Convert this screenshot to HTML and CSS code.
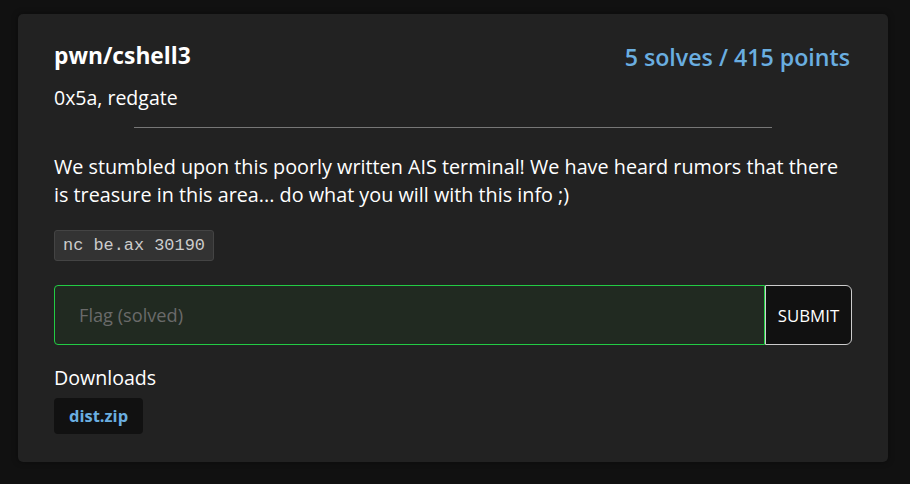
FILE: index.html
```html
<!DOCTYPE html>
<html>
<head>
<meta charset="utf-8">
<link rel="stylesheet" href="styles.css">
</head>
<body>
<div class="card">
  <div class="head">
    <div>
      <h1 class="title">pwn/cshell3</h1>
      <div class="author">0x5a, redgate</div>
    </div>
    <div class="score">5 solves / 415 points</div>
  </div>
  <hr class="rule">
  <p class="desc">We stumbled upon this poorly written AIS terminal! We have heard rumors that there is treasure in this area... do what you will with this info ;)</p>
  <div class="codewrap"><code class="code">nc be.ax 30190</code></div>
  <form class="flag">
    <input class="flag-input" type="text" placeholder="Flag (solved)">
    <button class="submit" type="button">SUBMIT</button>
  </form>
  <div class="dl-title">Downloads</div>
  <div class="dl-list"><a class="dl" href="#">dist.zip</a></div>
</div>
</body>
</html>
```
FILE: styles.css
```css
html, body { margin: 0; padding: 0; }
body {
  background: #111;
  font-family: "Open Sans", "Noto Sans", sans-serif;
  color: #fff;
  padding: 14px 22px 0 18px;
  height: 484px;
  box-sizing: border-box;
}
.card {
  background: #222;
  border-radius: 5px;
  padding: 27px 36px 28px 36px;
  height: 448px;
  box-sizing: border-box;
  box-shadow: 0 0 6px rgba(0,0,0,0.4);
}
.head {
  display: flex;
  justify-content: space-between;
  align-items: flex-start;
}
.title {
  margin: 0;
  font-size: 22.8px;
  font-weight: 700;
  line-height: 30px;
}
.author {
  margin-top: 14px;
  font-size: 19.5px;
  line-height: 26px;
}
.score {
  color: #6aaee0;
  font-size: 23.2px;
  font-weight: 600;
  line-height: 32px;
  margin-right: 2px;
}
.rule {
  width: 80%;
  margin: 16px auto 0;
  border: 0;
  border-top: 1px solid #777;
  height: 0;
}
.desc {
  margin: 25px 0 0;
  font-size: 19.8px;
  line-height: 28px;
}
.codewrap { margin-top: 21px; display: flex; }
.code {
  font-family: "Liberation Mono", monospace;
  font-size: 16.9px;
  color: #ccc;
  background: #333;
  border: 1px solid #444;
  border-radius: 3px;
  padding: 0 8px;
  height: 31px;
  line-height: 29px;
  box-sizing: border-box;
}
.flag {
  display: flex;
  margin: 24px 0 0;
  height: 60px;
}
.flag-input {
  flex: 1;
  background: #212a21;
  border: 1px solid #22cc44;
  border-radius: 4px 0 0 4px;
  padding: 0 24px;
  font-family: inherit;
  font-size: 18.2px;
  color: #ddd;
  outline: none;
}
.flag-input::placeholder { color: #6a6a6a; }
.submit {
  width: 87px;
  background: #111;
  color: #fff;
  border: 1px solid #ccc;
  border-radius: 0 6px 6px 0;
  font-family: inherit;
  font-size: 16.8px;
  padding: 0;
}
.dl-title {
  margin-top: 20px;
  font-size: 19.6px;
  line-height: 26px;
}
.dl-list { margin-top: 7px; display: flex; }
.dl {
  background: #111;
  color: #6aaee0;
  font-weight: 700;
  font-size: 16.5px;
  text-decoration: none;
  border-radius: 4px;
  padding: 0 15px;
  height: 36px;
  line-height: 36px;
}
```
